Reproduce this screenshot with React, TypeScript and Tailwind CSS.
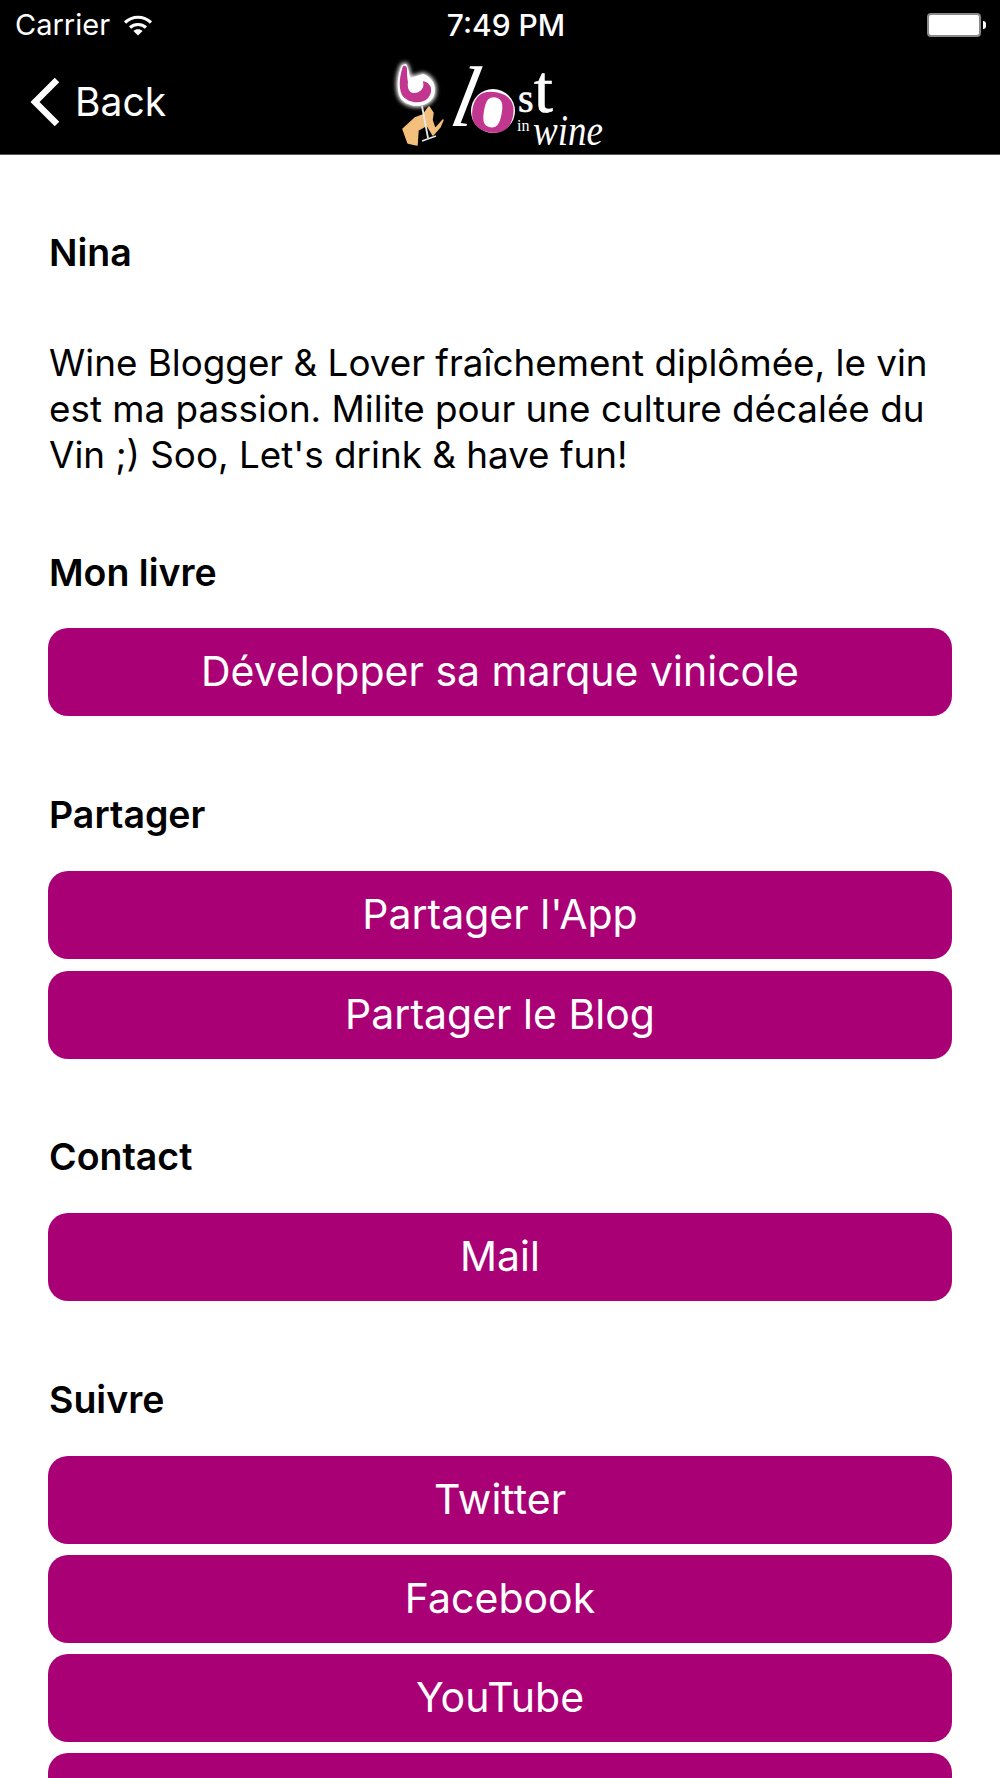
const font = "font-['Inter','Liberation_Sans',sans-serif]";

function WifiIcon() {
  return (
    <svg width="30" height="24" viewBox="0 0 30 24" className="text-white">
      <path d="M2 9.5C9.5 2.5 20.5 2.5 28 9.5" fill="none" stroke="currentColor" strokeWidth="3.2" />
      <path d="M7 14.5C11.5 10.5 18.5 10.5 23 14.5" fill="none" stroke="currentColor" strokeWidth="3.2" />
      <path d="M15 22.5L10.4 18C13 15.8 17 15.8 19.6 18Z" fill="currentColor" />
    </svg>
  );
}

function Battery() {
  return (
    <div className="flex items-center gap-[2px]">
      <div className="h-[24px] w-[54px] rounded-[4px] border-2 border-[#8a8a8a] bg-white" />
      <div className="h-[8px] w-[3px] rounded-r-full bg-white" />
    </div>
  );
}

function BackChevron() {
  return (
    <svg width="32" height="50" viewBox="0 0 32 50" className="block">
      <path d="M28 3L6 25L28 47" fill="none" stroke="#fff" strokeWidth="6.4" />
    </svg>
  );
}

// wine glass + leg mark with the wordmark next to it
function Logo() {
  return (
    <svg width="220" height="95" viewBox="0 0 220 95" className="block">
      <defs>
        <filter id="glow" x="-40%" y="-40%" width="180%" height="180%">
          <feGaussianBlur stdDeviation="2" />
        </filter>
      </defs>
      <path
        d="M13 74L25 63L33 60L39 52L43 58L42 65L45 74L53 65L50 72L43 80L37 70L28 75L27 90L18 88Z"
        fill="#f2bf7c"
        strokeLinejoin="round"
        stroke="#f2bf7c"
        strokeWidth="1.5"
      />
      <path
        d="M12 10C7 20 6 36 11 44C20 54 38 53 44 41C47 30 42 22 33 19L20 23C19 17 18 12 16 9Z"
        fill="#fff"
        stroke="#fff"
        strokeWidth="3"
        filter="url(#glow)"
      />
      <path d="M12 10C7 20 6 36 11 44C20 54 38 53 44 41C47 30 42 22 33 19L20 23C19 17 18 12 16 9Z" fill="#fff" />
      <path
        d="M13 11C10 20 8 32 12 40C17 48 32 50 38 43C43 37 42 30 36 27C33 26 33 26 33 27C35 33 30 38 24 38C19 38 17 33 18 27C17 22 17 16 17 14C17 11 15 10 13 11Z"
        fill="#c1368f"
      />
      <path d="M32 51L38 83" stroke="#e8e8e8" strokeWidth="1.8" fill="none" />
      <path d="M32 86L46 81" stroke="#e8e8e8" strokeWidth="1.6" fill="none" />
      <g fontFamily="'Liberation Serif', serif" fill="#fff">
        <text fontSize="86" fontStyle="italic" transform="translate(58 71) skewX(-12)">
          l
        </text>
        <ellipse cx="103" cy="56" rx="22" ry="22" />
        <text
          x="103"
          y="76"
          fontSize="57"
          fontWeight="700"
          textAnchor="middle"
          fill="#c1368f"
          stroke="#c1368f"
          strokeWidth="2.4"
          transform="rotate(10 103 56)"
        >
          O
        </text>
        <text x="128" y="57" fontSize="40" stroke="#fff" strokeWidth="0.6">
          s
        </text>
        <text x="144" y="57" fontSize="68" stroke="#fff" strokeWidth="0.6">
          t
        </text>
        <text x="127" y="76" fontSize="16">
          in
        </text>
        <text x="143" y="90" fontSize="44" fontStyle="italic" textLength="70" lengthAdjust="spacingAndGlyphs">
          wine
        </text>
      </g>
    </svg>
  );
}

function SectionTitle({ children, className }: { children: React.ReactNode; className: string }) {
  return <h2 className={`pl-px text-[37.5px] leading-[44px] font-semibold text-black ${className}`}>{children}</h2>;
}

function PinkButton({ label }: { label?: string }) {
  return (
    <button className="flex h-[88px] w-full shrink-0 items-center justify-center rounded-[20px] bg-[#a90076] text-[41px] text-white">
      {label}
    </button>
  );
}

export default function App() {
  return (
    <div className={`h-[1778px] w-[1000px] overflow-hidden bg-white ${font}`}>
      <header className="h-[155px] border-b border-[#555] bg-black text-white">
        <div className="relative flex h-[50px] items-center justify-between pr-[14px] pl-[15px]">
          <div className="flex items-center gap-[13px]">
            <span className="text-[29px]">Carrier</span>
            <WifiIcon />
          </div>
          <span className="absolute left-[calc(50%+6px)] -translate-x-1/2 text-[30px] font-medium">7:49 PM</span>
          <Battery />
        </div>
        <div className="relative flex h-[104px] items-center">
          <div className="flex items-center gap-[14px] pl-[29px]">
            <BackChevron />
            <span className="text-[39px]">Back</span>
          </div>
          <div className="absolute top-[5px] left-[390px]">
            <Logo />
          </div>
        </div>
      </header>
      <main className="flex flex-col px-[48px]">
        <SectionTitle className="mt-[76px]">Nina</SectionTitle>
        <p className="mt-[65px] pl-px text-[36.8px] leading-[46px] text-black">
          Wine Blogger &amp; Lover fraîchement diplômée, le vin est ma passion. Milite pour une culture décalée du Vin ;)
          Soo, Let's drink &amp; have fun!
        </p>
        <SectionTitle className="mt-[73px]">Mon livre</SectionTitle>
        <div className="mt-[33px]">
          <PinkButton label="Développer sa marque vinicole" />
        </div>
        <SectionTitle className="mt-[77px]">Partager</SectionTitle>
        <div className="mt-[34px] flex flex-col gap-[12px]">
          <PinkButton label="Partager l'App" />
          <PinkButton label="Partager le Blog" />
        </div>
        <SectionTitle className="mt-[76px]">Contact</SectionTitle>
        <div className="mt-[34px]">
          <PinkButton label="Mail" />
        </div>
        <SectionTitle className="mt-[77px]">Suivre</SectionTitle>
        <div className="mt-[34px] flex flex-col gap-[11px]">
          <PinkButton label="Twitter" />
          <PinkButton label="Facebook" />
          <PinkButton label="YouTube" />
          <PinkButton />
        </div>
      </main>
    </div>
  );
}
